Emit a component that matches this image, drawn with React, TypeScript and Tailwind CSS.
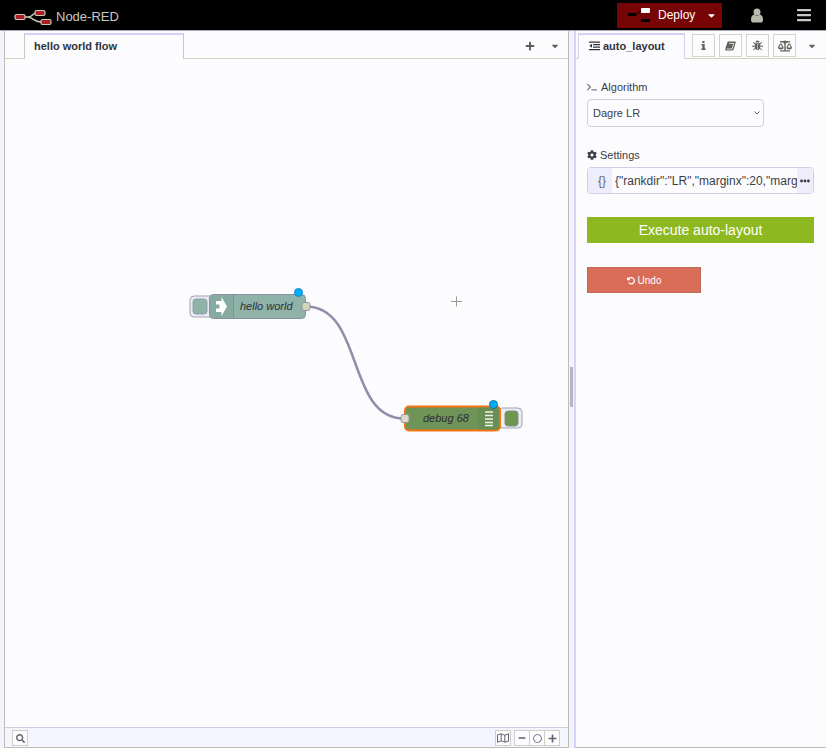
import type { ReactNode } from 'react';
import {
  FaBalanceScale,
  FaBars,
  FaCaretDown,
  FaCog,
  FaEllipsisH,
  FaMinus,
  FaPlus,
  FaRegCircle,
  FaRegMap,
  FaSearch,
  FaTerminal,
} from 'react-icons/fa';

function Logo() {
  return (
    <svg width="39" height="18" viewBox="0 0 39 18" fill="none" aria-hidden="true">
      <path d="M10 9h4c5 0 4-4.500 10-4.500M13 9c7 0 6 5 14 5" stroke="#c9c9bb" strokeWidth="1.400" />
      <g fill="#a81f26" stroke="#c9c9bb" strokeWidth="1.200">
        <rect x="1" y="6.500" width="10" height="5" rx="1.500" />
        <rect x="21" y="2.500" width="10" height="5" rx="1.500" />
        <rect x="27" y="11.500" width="10" height="5" rx="1.500" />
      </g>
    </svg>
  );
}

function DeployIcon() {
  return (
    <svg width="22" height="16" viewBox="0 0 22 16" aria-hidden="true">
      <path d="M7 7.500c4 0 4-4 7-4" stroke="#1a0000" strokeWidth="1.200" fill="none" />
      <rect x="0" y="6" width="8" height="3" fill="#000" />
      <rect x="13" y="1" width="9" height="5" rx="1" fill="#fff" />
      <rect x="13" y="12" width="9" height="3" fill="#000" />
    </svg>
  );
}

function OutdentIcon() {
  return (
    <svg width="11" height="10" viewBox="0 0 11 10" fill="currentColor" aria-hidden="true">
      <path d="M0 0.500h11v1.300H0zM4 3h7v1.300H4zM4 5.500h7v1.300H4zM0 8h11v1.300H0zM3 2.800v4L0.300 4.800z" />
    </svg>
  );
}

function InfoIcon() {
  return (
    <svg width="5" height="9" viewBox="0 0 5 9" fill="currentColor" aria-hidden="true">
      <path d="M1.300 0h2.200v1.900H1.300zM0.500 3h3.200v4.600h1V9H0.300V7.600h1V4.400h-.8z" />
    </svg>
  );
}

function BookIcon() {
  return (
    <svg width="11" height="10" viewBox="0 0 11 10" aria-hidden="true">
      <path d="M3.500 0.500h6.500c.7 0 .9.500.7 1L8.800 8c-.2.700-.8 1.500-1.600 1.500H1.500C.4 9.500 0 8.500.3 7.700L2.300 1.500c.2-.6.6-1 1.200-1z" fill="#62625c" />
      <path d="M4.300 2.500h4.200M1.500 8h5.600l1.800-6" stroke="#f2f2f0" strokeWidth="0.800" fill="none" />
    </svg>
  );
}

function BugIcon() {
  return (
    <svg width="11" height="11" viewBox="0 0 11 11" aria-hidden="true">
      <path d="M3.500 2.600a2 2 0 0 1 4 0zM2.800 3.200h5.400V7a2.700 2.900 0 0 1-5.400 0z" fill="#62625c" />
      <path d="M1 2.200L3 4M10 2.200L8 4M0 6.200h3M11 6.200H8M1.200 10l2-1.800M9.800 10l-2-1.800" stroke="#62625c" fill="none" />
      <path d="M5.500 4v5.500" stroke="#fcfcff" strokeWidth="0.500" />
    </svg>
  );
}

function UndoIcon() {
  return (
    <svg width="8" height="9" viewBox="0 0 8 9" fill="none" aria-hidden="true">
      <path d="M1.500 3.200A3.100 3.100 0 1 1 1.700 6.600" stroke="currentColor" strokeWidth="1.300" />
      <path d="M0 0.800v3.400h3.400z" fill="currentColor" />
    </svg>
  );
}

function Header() {
  return (
    <header className="flex h-[30px] shrink-0 items-center bg-black pr-[14px] pl-[14px]">
      <div className="flex items-center gap-[3px] pt-1">
        <Logo />
        <span className="text-[13px] leading-4 text-[#c8c8c0]">Node-RED</span>
      </div>
      <div className="ml-auto flex items-center">
        <div className="flex h-[25px] bg-[#780505] text-white">
          <button type="button" className="flex w-[84px] items-center gap-2 pl-[11px] text-[12px]">
            <DeployIcon />
            Deploy
          </button>
          <button type="button" aria-label="Deploy options" className="flex w-[21px] items-center justify-center">
            <FaCaretDown size={11} />
          </button>
        </div>
        <button type="button" aria-label="User" className="ml-[29px] text-[#b9b9ae]">
          <svg width="12" height="15" viewBox="0 0 12 15" fill="currentColor" aria-hidden="true">
            <circle cx="6" cy="4" r="3.500" />
            <path d="M3 6.500c-2 .6-3 2.500-3 5C0 14 1 14.500 2.500 14.500h7C11 14.500 12 14 12 11.500c0-2.500-1-4.400-3-5-1.800 1.500-4.200 1.500-6 0z" />
          </svg>
        </button>
        <button type="button" aria-label="Menu" className="ml-[33px] text-[#c8c8cc]">
          <FaBars size={16} />
        </button>
      </div>
    </header>
  );
}

function FlowCanvas() {
  return (
    <div className="min-h-0 flex-1 overflow-hidden">
      <svg width="564" height="668" viewBox="5 59 564 668" className="block" fontFamily="'Liberation Sans', Arial, sans-serif">
        <path d="M306 306.500C364 306.500 346 418.500 404 418.500" fill="none" stroke="#8f8fa8" strokeWidth="2.500" />

        <rect x="190" y="296" width="24" height="21" rx="4" fill="#ececf8" stroke="#a3a3ad" />
        <rect x="193" y="299" width="14" height="15" rx="3" fill="#8fb3a9" stroke="#8c9fa8" />
        <rect x="209.500" y="294.500" width="96" height="24" rx="4" fill="#8fb3a9" stroke="#8a8fa3" />
        <path d="M214 295h19.500v23H214a4 4 0 0 1-4-4v-15a4 4 0 0 1 4-4z" fill="#87aba1" />
        <path d="M233.500 295v23" stroke="#84919b" />
        <path d="M216 301h5.500v-4l5.500 9.500-5.500 9.500v-4H216v-3.500h3.500v-4H216z" fill="#fff" />
        <text x="240" y="310" fontSize="11" fontStyle="italic" fill="#2e2e38">hello world</text>
        <rect x="302" y="302.500" width="8" height="8" rx="2" fill="#d4d4bd" stroke="#96969c" />
        <circle cx="298.500" cy="292.500" r="4" fill="#00adf7" stroke="#1688c8" />

        <rect x="498" y="408" width="24" height="20" rx="4" fill="#ececf8" stroke="#a3a3ad" />
        <rect x="505" y="411" width="13" height="15" rx="3" fill="#6f9651" stroke="#7d8f88" />
        <rect x="405" y="406.500" width="95" height="24" rx="4" fill="#6f9457" stroke="#f97210" strokeWidth="2" />
        <path d="M478 407.500h17a4 4 0 0 1 4 4v14a4 4 0 0 1-4 4h-17z" fill="#698e54" />
        <path d="M485 412h8M485 415.500h8M485 419h8M485 422.500h8M485 425.500h8" stroke="#eef3ea" strokeWidth="1.700" />
        <text x="423" y="422" fontSize="11" fontStyle="italic" fill="#2e2e38">debug 68</text>
        <rect x="401" y="414.500" width="8" height="8" rx="2" fill="#dadaca" stroke="#96969c" />
        <circle cx="493.500" cy="404.500" r="4" fill="#00adf7" stroke="#1c6d9c" />

        <path d="M451 301.500h11M456.500 296.500v10" stroke="#9a9a8e" />
      </svg>
    </div>
  );
}

function FooterButton({ label, children }: { label: string; children: ReactNode }) {
  return (
    <button
      type="button"
      aria-label={label}
      className="-ml-px flex size-4 items-center justify-center border border-[#cfcfc8] bg-[#fcfcff] text-[#63636b]"
    >
      {children}
    </button>
  );
}

function Workspace() {
  return (
    <main className="flex min-w-0 flex-1 flex-col border-r border-b border-l border-[#bdbdb8] bg-[#fcfcff]">
      <div className="flex h-7 shrink-0 items-end">
        <div className="h-7 w-[19px] border-b border-[#d2d2bd]" />
        <button
          type="button"
          className="h-[26px] w-[160px] border-x border-t-2 border-x-[#c9c9c0] border-t-[#d2d2fa] px-[9px] pb-[2px] text-left text-[11px] font-bold text-[#33333b]"
        >
          hello world flow
        </button>
        <div className="flex h-7 flex-1 items-center justify-end gap-[15px] border-b border-[#d2d2bd] pt-[2px] pr-2 text-[#5c5c5c]">
          <button type="button" aria-label="Add flow">
            <FaPlus size={10} />
          </button>
          <button type="button" aria-label="List flows">
            <FaCaretDown size={10} />
          </button>
        </div>
      </div>
      <FlowCanvas />
      <footer className="flex h-5 shrink-0 items-center border-t border-[#cdcde0] bg-[#f5f5ff] pt-px pr-2 pl-2">
        <FooterButton label="Search flows">
          <FaSearch size={9} />
        </FooterButton>
        <div className="ml-auto">
          <FooterButton label="Toggle navigator">
            <FaRegMap size={12} />
          </FooterButton>
        </div>
        <div className="ml-1 flex">
          <FooterButton label="Zoom out">
            <FaMinus size={8} />
          </FooterButton>
          <FooterButton label="Reset zoom">
            <FaRegCircle size={9} />
          </FooterButton>
          <FooterButton label="Zoom in">
            <FaPlus size={9} />
          </FooterButton>
        </div>
      </footer>
    </main>
  );
}

function SidebarTab({ label, children }: { label: string; children: ReactNode }) {
  return (
    <button
      type="button"
      aria-label={label}
      className="flex h-[23px] w-[23px] shrink-0 items-center justify-center border border-[#d4d4cc] text-[#62625c]"
    >
      {children}
    </button>
  );
}

function Sidebar() {
  return (
    <aside className="flex w-[252px] shrink-0 flex-col border-b border-l-2 border-b-[#bdbdb8] border-l-[#d3d3fb] bg-[#fcfcff]">
      <div className="flex h-7 shrink-0 items-end">
        <div className="h-7 w-[2px] border-b border-[#d2d2bd]" />
        <button
          type="button"
          className="flex h-[26px] w-[107px] items-center gap-[3px] border-x border-t-2 border-[#d2d2f4] pb-[2px] pl-[10px] text-[11px] font-bold text-[#33333b]"
        >
          <OutdentIcon />
          auto_layout
        </button>
        <div className="flex h-7 flex-1 items-center gap-1 border-b border-[#d2d2bd] pt-[2px] pr-[9px] pl-[7px]">
          <SidebarTab label="Information">
            <InfoIcon />
          </SidebarTab>
          <SidebarTab label="Help">
            <BookIcon />
          </SidebarTab>
          <SidebarTab label="Debug messages">
            <BugIcon />
          </SidebarTab>
          <SidebarTab label="Compare">
            <FaBalanceScale size={14} />
          </SidebarTab>
          <button type="button" aria-label="More tabs" className="ml-auto text-[#62625c]">
            <FaCaretDown size={10} />
          </button>
        </div>
      </div>

      <form className="flex flex-col pt-5 pr-3 pl-[11px] text-[11px] text-[#3c3c46]">
        <label htmlFor="algorithm" className="flex h-4 items-center gap-1">
          <FaTerminal size={10} className="text-[#77778c]" />
          Algorithm
        </label>
        <div className="relative mt-1 w-[177px]">
          <select
            id="algorithm"
            className="h-7 w-full appearance-none rounded border border-[#d0d0d4] bg-[#fcfcff] px-[5px] text-[11px]"
          >
            <option>Dagre LR</option>
          </select>
          <svg width="6" height="4" viewBox="0 0 6 4" className="pointer-events-none absolute top-3 right-1" fill="none" aria-hidden="true">
            <path d="M0.500 0.500L3 3l2.500-2.500" stroke="#5f5f6b" />
          </svg>
        </div>

        <label htmlFor="settings" className="mt-5 flex h-4 items-center gap-[3px]">
          <FaCog size={10} />
          Settings
        </label>
        <div className="mt-1 flex h-[27px] overflow-hidden rounded border border-[#cfcfe4]">
          <button type="button" aria-label="JSON type" className="w-6 shrink-0 bg-[#ededfb] pl-1 text-[12px] text-[#66666e]">
            {'{}'}
          </button>
          <input
            id="settings"
            className="min-w-0 flex-1 bg-[#fcfcff] pl-[3px] text-[12px] outline-none"
            defaultValue={'{"rankdir":"LR","marginx":20,"marginy":20}'}
          />
          <button type="button" aria-label="Edit JSON" className="flex w-4 shrink-0 items-center justify-center bg-[#ededfb]">
            <FaEllipsisH size={10} />
          </button>
        </div>

        <button type="button" className="mt-[23px] h-[26px] bg-[#8eb820] text-[14px] text-white">
          Execute auto-layout
        </button>
        <button
          type="button"
          className="mt-6 flex h-[26px] w-[114px] items-center justify-center gap-[3px] border border-[#c0695a] bg-[#d86c56] text-[10px] text-white"
        >
          <UndoIcon />
          Undo
        </button>
      </form>
    </aside>
  );
}

export default function App() {
  return (
    <div
      className="flex h-screen flex-col overflow-hidden bg-[#f3f3fd]"
      style={{ fontFamily: "'Liberation Sans', Arial, sans-serif" }}
    >
      <Header />
      <div className="flex min-h-0 flex-1 border-t border-[#a9a9b8] pl-1">
        <Workspace />
        <div className="flex w-[5px] shrink-0 items-center justify-center pb-[5px]">
          <div className="h-10 w-[3px] bg-[#b4b4c4]" />
        </div>
        <Sidebar />
      </div>
    </div>
  );
}
